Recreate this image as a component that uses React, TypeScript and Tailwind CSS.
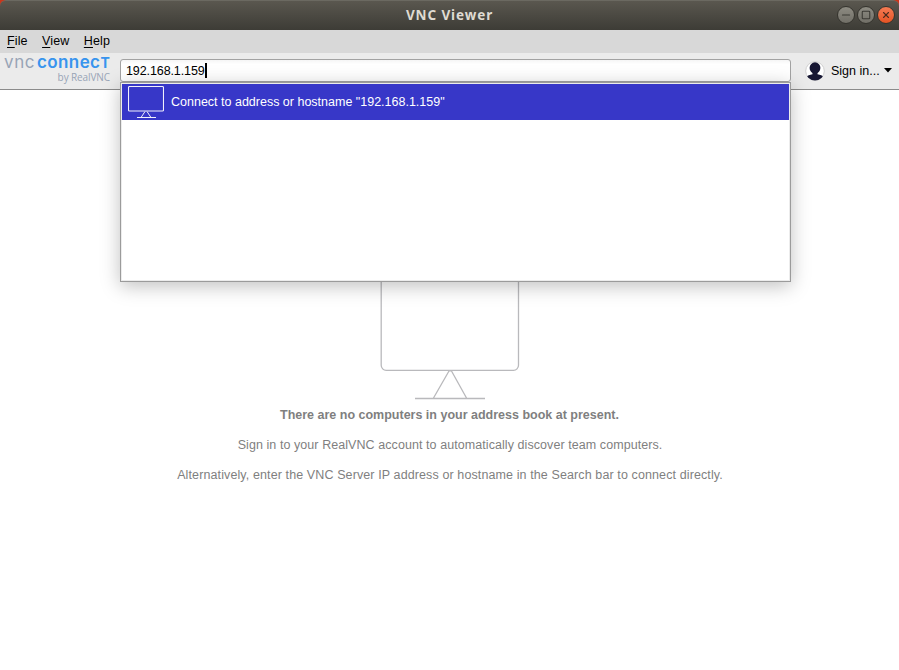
import { Minus, Square, X } from 'lucide-react';

const sans = "font-['Liberation_Sans',Arial,sans-serif]";

function TitleBar() {
  const button =
    'flex h-[18px] w-[18px] items-center justify-center rounded-full border border-[#35342e] bg-linear-to-b from-[#8d8b82] to-[#716f67] text-[#3b3a34]';
  return (
    <div className="bg-[#c9361b]">
      <header className="flex h-[30px] items-center rounded-t-[6px] border-t border-[#6b6961] bg-linear-to-b from-[#5a574f] to-[#3d3c36] pr-[4px] pb-[1px]">
        <div className="w-[62px]" />
        <h1 className="flex-1 text-center font-['Noto_Sans',sans-serif] text-[13.5px] leading-[14px] font-bold tracking-[0.9px] text-[#dfdbd2]">
          VNC Viewer
        </h1>
        <div className="flex w-[58px] justify-end gap-[2px]">
          <button className={button}>
            <Minus size={12} strokeWidth={2.2} className="shrink-0" />
          </button>
          <button className={button}>
            <Square size={10} strokeWidth={2.6} className="shrink-0" />
          </button>
          <button className="flex h-[18px] w-[18px] items-center justify-center rounded-full border border-[#35342e] bg-linear-to-b from-[#f47b53] to-[#e65322] text-[#4a2c1f]">
            <X size={10} strokeWidth={2.6} className="shrink-0" />
          </button>
        </div>
      </header>
    </div>
  );
}

function MenuBar() {
  return (
    <nav className="flex h-[23px] items-center gap-[14.500px] bg-[#d8d8d8] pl-[7px] text-[12.5px] leading-none tracking-[0.1px] text-black">
      {['File', 'View', 'Help'].map((label) => (
        <span key={label} className="whitespace-nowrap">
          <span className="underline underline-offset-2">{label[0]}</span>
          {label.slice(1)}
        </span>
      ))}
    </nav>
  );
}

function Logo() {
  return (
    <div className="flex h-full w-[120px] flex-col pt-[1px] pl-[4px] font-['Inter',sans-serif] whitespace-nowrap">
      <div className="flex h-[17px] items-baseline text-[17px] leading-[17px]">
        <span className="w-[33px] tracking-[0.6px] text-[#98a4b6]">vnc</span>
        <span className="font-semibold tracking-[0.4px] text-[#3894ee]">
          connec<span className="text-[14px] leading-none font-bold">T</span>
        </span>
      </div>
      <div className="w-[106px] text-right font-['Open_Sans',sans-serif] text-[10px] leading-[13px] tracking-[-0.1px] text-[#98a4b6]">
        by RealVNC
      </div>
    </div>
  );
}

function Avatar() {
  return (
    <svg width="20" height="20" viewBox="0 0 20 20" className="shrink-0">
      <defs>
        <clipPath id="face">
          <circle cx="10" cy="10" r="9.5" />
        </clipPath>
      </defs>
      <circle cx="10" cy="10" r="9.3" fill="#fff" stroke="#cfcfcf" strokeWidth="1" />
      <g clipPath="url(#face)" fill="#171733">
        <ellipse cx="10" cy="7" rx="5.4" ry="5.7" />
        <path d="M7.5 10h5v3.200c3 .5 5 1.300 6.500 3V20H1v-3.800c1.500-1.700 3.500-2.500 6.500-3z" />
      </g>
    </svg>
  );
}

function SuggestionList() {
  return (
    <div className="absolute top-[23px] left-0 h-[200px] w-[671px] border border-[#9b9b9b] bg-white shadow-[0_4px_18px_rgba(0,0,0,0.25)]">
      <div className="h-full border border-[#ececec]">
        <div className="flex h-[36px] items-center bg-[#3737c8] pl-[6px] text-white">
          <svg width="36" height="34" viewBox="0 0 36 34" fill="none" stroke="#f1f1fb" className="shrink-0">
            <rect x="0.5" y="1.500" width="35" height="24.500" rx="1" strokeWidth="1.100" />
            <path d="M17 26.500l-4 6M19 26.500l4 6M9 32.500h19" />
          </svg>
          <span className="ml-[7px] text-[12.5px] whitespace-nowrap">
            Connect to address or hostname "192.168.1.159"
          </span>
        </div>
      </div>
    </div>
  );
}

function Toolbar() {
  return (
    <div className="flex h-[37px] border-b border-[#8b8b8b] bg-[#ebebeb]">
      <Logo />
      <div className="relative mt-[6px] h-[23px] w-[671px]">
        <div className="flex h-[23px] items-center rounded-[3px] border border-[#a2a2a2] bg-linear-to-b from-[#f5f5f5] to-white to-20% pl-[5px] text-[12.5px] text-black">
          <span className="pt-[2px] tracking-[-0.1px]">192.168.1.159</span>
          <span className="h-[15px] w-[2px] bg-black" />
        </div>
        <SuggestionList />
      </div>
      <div className="flex h-[36px] items-center pl-[14px] text-[12.5px] text-black">
        <Avatar />
        <span className="ml-[6px] w-[53px] whitespace-nowrap">Sign in...</span>
        <svg width="9" height="5" viewBox="0 0 9 5" className="mb-[2px] shrink-0">
          <path d="M0 0h8L4 4.500z" />
        </svg>
      </div>
    </div>
  );
}

function EmptyState() {
  return (
    <main className="flex h-[580px] flex-col items-center bg-white pt-[180px] text-[12.5px] leading-[14px] text-[#7f7f7f]">
      <svg width="140" height="130" viewBox="0 0 140 130" fill="none" stroke="#b9b9bc" strokeWidth="1.300">
        <rect x="1.200" y="5" width="137.300" height="95.300" rx="5" />
        <path d="M69 101L53.500 128M71.500 101L86.500 128M35 128.500h70M68.500 100.800h3.500" />
      </svg>
      <p className="mt-[8px] font-bold">There are no computers in your address book at present.</p>
      <p className="mt-[16px] pl-[1px] tracking-[0.070px]">Sign in to your RealVNC account to automatically discover team computers.</p>
      <p className="mt-[16px] pl-[1px] tracking-[0.110px]">
        Alternatively, enter the VNC Server IP address or hostname in the Search bar to connect directly.
      </p>
    </main>
  );
}

export default function App() {
  return (
    <div className={`h-[670px] w-[899px] overflow-hidden ${sans}`}>
      <TitleBar />
      <MenuBar />
      <Toolbar />
      <EmptyState />
    </div>
  );
}
